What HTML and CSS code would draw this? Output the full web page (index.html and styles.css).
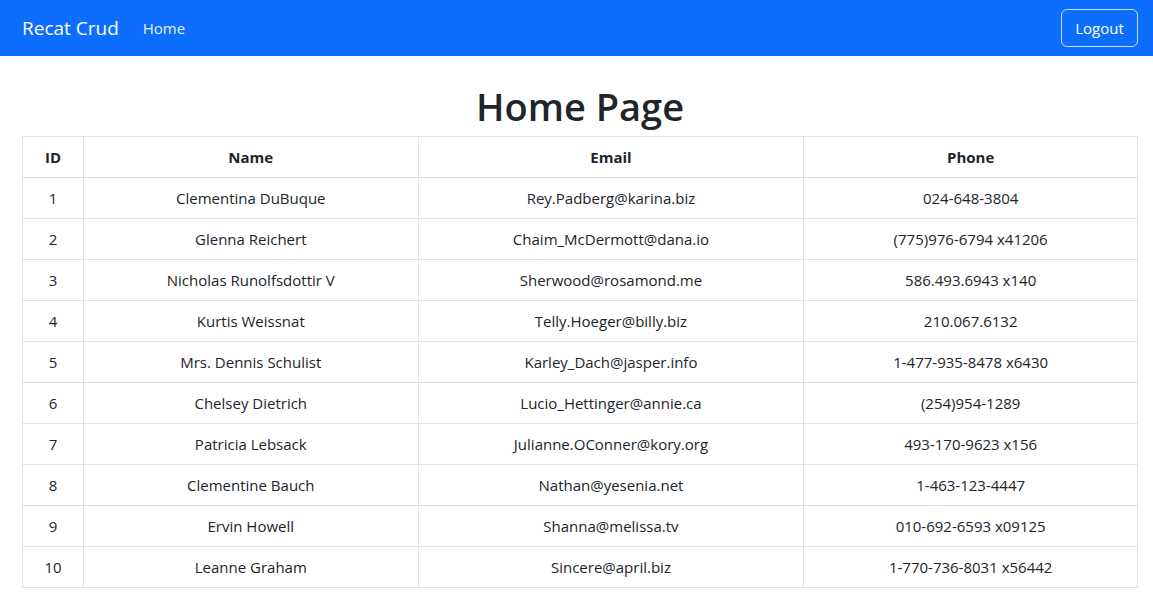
FILE: index.html
```html
<!DOCTYPE html>
<html>
<head>
<meta charset="utf-8">
<link rel="stylesheet" href="styles.css">
</head>
<body>
<nav class="navbar">
  <div class="nav-left">
    <span class="brand">Recat Crud</span>
    <span class="nav-link">Home</span>
  </div>
  <button class="btn-logout">Logout</button>
</nav>
<main class="content">
  <h1 class="title">Home Page</h1>
  <table class="users">
    <thead>
      <tr><th class="c-id">ID</th><th class="c-name">Name</th><th class="c-email">Email</th><th class="c-phone">Phone</th></tr>
    </thead>
    <tbody>
      <tr><td>1</td><td>Clementina DuBuque</td><td>Rey.Padberg@karina.biz</td><td>024-648-3804</td></tr>
      <tr><td>2</td><td>Glenna Reichert</td><td>Chaim_McDermott@dana.io</td><td>(775)976-6794 x41206</td></tr>
      <tr><td>3</td><td>Nicholas Runolfsdottir V</td><td>Sherwood@rosamond.me</td><td>586.493.6943 x140</td></tr>
      <tr><td>4</td><td>Kurtis Weissnat</td><td>Telly.Hoeger@billy.biz</td><td>210.067.6132</td></tr>
      <tr><td>5</td><td>Mrs. Dennis Schulist</td><td>Karley_Dach@jasper.info</td><td>1-477-935-8478 x6430</td></tr>
      <tr><td>6</td><td>Chelsey Dietrich</td><td>Lucio_Hettinger@annie.ca</td><td>(254)954-1289</td></tr>
      <tr><td>7</td><td>Patricia Lebsack</td><td>Julianne.OConner@kory.org</td><td>493-170-9623 x156</td></tr>
      <tr><td>8</td><td>Clementine Bauch</td><td>Nathan@yesenia.net</td><td>1-463-123-4447</td></tr>
      <tr><td>9</td><td>Ervin Howell</td><td>Shanna@melissa.tv</td><td>010-692-6593 x09125</td></tr>
      <tr><td>10</td><td>Leanne Graham</td><td>Sincere@april.biz</td><td>1-770-736-8031 x56442</td></tr>
    </tbody>
  </table>
</main>
</body>
</html>
```

FILE: styles.css
```css
* { box-sizing: border-box; }
html, body { margin: 0; padding: 0; }
body {
  font-family: "Open Sans", "Noto Sans", "Liberation Sans", sans-serif;
  font-size: 15px;
  color: #212529;
  background: #fff;
}
.navbar {
  height: 56px;
  background: #0d6efd;
  display: flex;
  align-items: center;
  justify-content: space-between;
  padding: 0 15px 0 22px;
}
.nav-left { display: flex; align-items: center; }
.brand {
  color: #fff;
  font-size: 19px;
  margin-right: 24px;
}
.nav-link {
  color: rgba(255,255,255,0.92);
  font-size: 15px;
}
.btn-logout {
  font-family: inherit;
  font-size: 15px;
  color: #fff;
  background: transparent;
  border: 1px solid rgba(255,255,255,0.75);
  border-radius: 6px;
  width: 77px;
  height: 38px;
  padding: 0;
  margin-top: 0;
}
.content {
  padding: 0 15px 0 22px;
}
.title {
  margin: 24px 0 4px;
  text-align: center;
  font-size: 38px;
  font-weight: 600;
  line-height: 52px;
}
.users {
  width: 100%;
  border-collapse: collapse;
  border: 1px solid #dee2e6;
}
.users th, .users td {
  border: 1px solid #dee2e6;
  text-align: center;
  height: 41px;
  padding: 0 8px;
  vertical-align: middle;
}
.users th { font-weight: 700; }
.c-id { width: 61px; }
.c-name { width: 335px; }
.c-email { width: 386px; }
.c-phone { width: 334px; }
```
